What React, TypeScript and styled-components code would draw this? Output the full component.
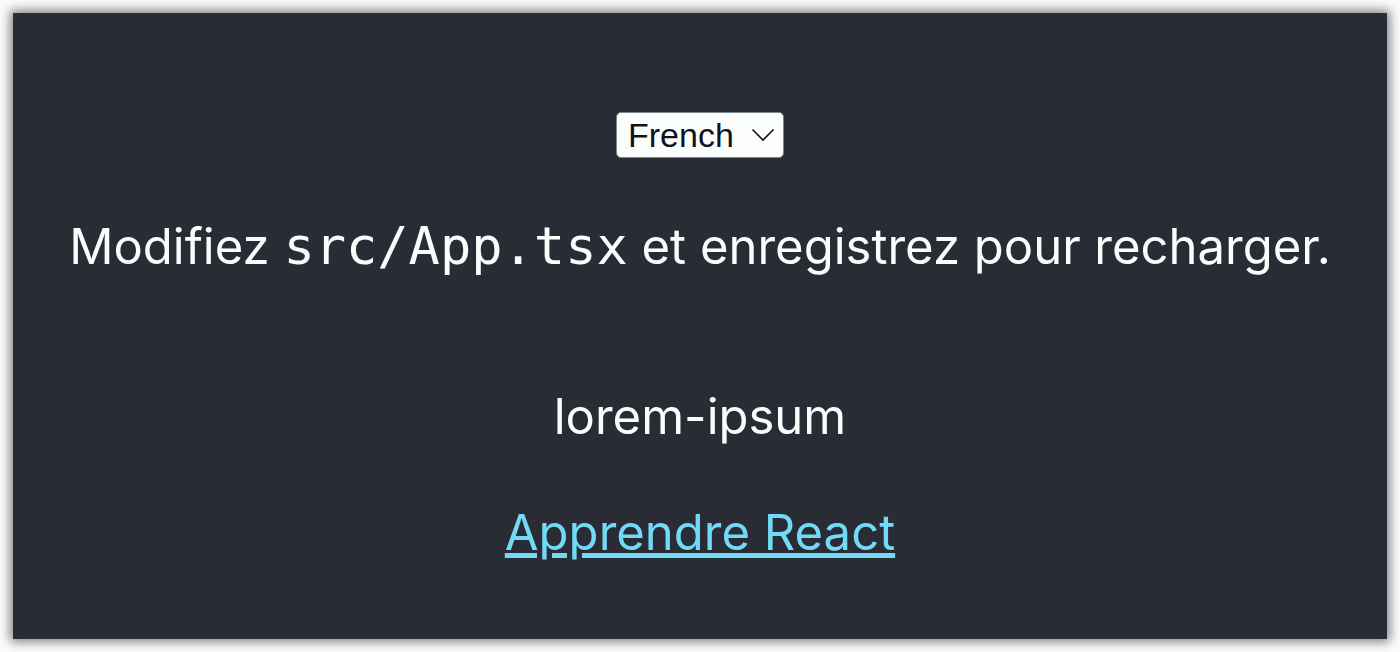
import React, { useState } from "react";
import styled, { createGlobalStyle } from "styled-components";

const GlobalStyle = createGlobalStyle`
  *, *::before, *::after { box-sizing: border-box; }
  body { margin: 0; background: #fbfdfc; }
`;

const Page = styled.div`
  min-height: 100vh;
  padding: 13px;
  display: grid;
`;

const Header = styled.header`
  display: flex;
  flex-direction: column;
  align-items: center;
  gap: 54px;
  padding: 99px 24px 68px;
  background: #2a2c35;
  color: #fbfdfc;
  font: 49px/62px Inter, "Liberation Sans", sans-serif;
  text-align: center;
  box-shadow: 0 0 10px 3px rgba(20, 22, 28, 0.52);
`;

const SelectBox = styled.div`
  display: grid;
  align-items: center;
  margin-bottom: 4px;
`;

const Select = styled.select`
  grid-area: 1 / 1;
  appearance: none;
  width: 168px;
  height: 46px;
  padding: 0 40px 0 11px;
  border: 1px solid #76868c;
  border-radius: 5px;
  background: #fbfdfc;
  color: #10131c;
  font: 34px/40px "Liberation Sans", Arial, sans-serif;
`;

const Chevron = styled.svg`
  grid-area: 1 / 1;
  justify-self: end;
  margin-right: 9px;
  pointer-events: none;
`;

const Paragraph = styled.p`
  margin: 0;
`;

const Message = styled(Paragraph)`
  padding-bottom: 54px;
`;

const Code = styled.code`
  font-family: "DejaVu Sans Mono", monospace;
  font-size: 52px;
  line-height: 1;
`;

const Link = styled.a`
  color: #72daf6;
  text-decoration-thickness: 5px;
  text-underline-offset: 3px;
`;

export default function App() {
  const [language, setLanguage] = useState("fr");
  return (
    <>
      <GlobalStyle />
      <Page>
        <Header>
          <SelectBox>
            <Select aria-label="Language" value={language} onChange={(e) => setLanguage(e.target.value)}>
              <option value="fr">French</option>
            </Select>
            <Chevron width="24" height="16" viewBox="0 0 24 16" fill="none" aria-hidden="true">
              <path d="M1.5 2.5L12 13L22.5 2.5" stroke="#10131c" strokeWidth="1.6" />
            </Chevron>
          </SelectBox>
          <Message>
            Modifiez <Code>src/App.tsx</Code> et enregistrez pour recharger.
          </Message>
          <Paragraph>lorem-ipsum</Paragraph>
          <Link href="https://reactjs.org">Apprendre React</Link>
        </Header>
      </Page>
    </>
  );
}
